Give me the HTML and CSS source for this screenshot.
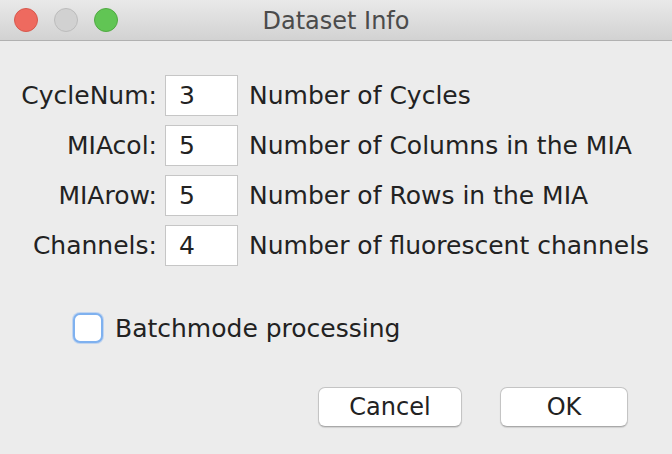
FILE: index.html
```html
<!DOCTYPE html>
<html>
<head>
<meta charset="utf-8">
<link rel="stylesheet" href="styles.css">
</head>
<body>
<div class="window">
  <div class="titlebar">
    <div class="lights">
      <span class="light red"></span>
      <span class="light gray"></span>
      <span class="light green"></span>
    </div>
    <div class="title">Dataset Info</div>
  </div>
  <div class="content">
    <div class="form">
      <label class="lbl">CycleNum:</label>
      <div class="field">3</div>
      <div class="desc">Number of Cycles</div>
      <label class="lbl">MIAcol:</label>
      <div class="field">5</div>
      <div class="desc">Number of Columns in the MIA</div>
      <label class="lbl">MIArow:</label>
      <div class="field">5</div>
      <div class="desc">Number of Rows in the MIA</div>
      <label class="lbl">Channels:</label>
      <div class="field">4</div>
      <div class="desc">Number of fluorescent channels</div>
    </div>
    <div class="check-row">
      <span class="checkbox"></span>
      <span class="check-label">Batchmode processing</span>
    </div>
    <div class="buttons">
      <div class="btn cancel">Cancel</div>
      <div class="btn ok">OK</div>
    </div>
  </div>
</div>
</body>
</html>
```

FILE: styles.css
```css
* { box-sizing: border-box; }
html, body {
  margin: 0;
  padding: 0;
  width: 672px;
  height: 454px;
  overflow: hidden;
  background: #ececec;
  font-family: "DejaVu Sans", "Liberation Sans", sans-serif;
  color: #222;
}
.window {
  width: 672px;
  height: 454px;
  display: flex;
  flex-direction: column;
}
.titlebar {
  height: 41px;
  position: relative;
  background: linear-gradient(#e9e9e9, #d2d2d2);
  border-bottom: 1px solid #b1b1b1;
  display: flex;
  align-items: center;
  justify-content: center;
}
.lights {
  position: absolute;
  left: 14px;
  top: 8px;
  display: flex;
  gap: 16px;
}
.light {
  width: 24px;
  height: 24px;
  border-radius: 50%;
  display: block;
}
.red { background: #ee6a5f; border: 1px solid #d7584d; }
.gray { background: #d1d1d1; border: 1px solid #bcbcbc; }
.green { background: #61c554; border: 1px solid #50aa42; }
.title {
  font-size: 24px;
  color: #4b4b4b;
  margin-top: 1px;
}
.content {
  flex: 1;
  display: flex;
  flex-direction: column;
}
.form {
  display: grid;
  grid-template-columns: 165px 73px 1fr;
  row-gap: 9px;
  padding-top: 34px;
  align-items: center;
  font-size: 25px;
}
.lbl {
  text-align: right;
  padding-right: 8px;
}
.field {
  height: 41px;
  background: #fff;
  border: 1px solid #c6c6c6;
  padding-left: 13px;
  display: flex;
  align-items: center;
}
.desc {
  padding-left: 11px;
}
.check-row {
  display: flex;
  align-items: center;
  margin-top: 47px;
  padding-left: 73px;
  font-size: 25px;
}
.checkbox {
  width: 30px;
  height: 30px;
  border-radius: 7px;
  background: #fff;
  border: 2px solid #7fb1ef;
  box-shadow: 0 0 0 1px rgba(140, 185, 245, 0.45);
  display: block;
}
.check-label {
  margin-left: 12px;
}
.buttons {
  display: flex;
  justify-content: flex-end;
  gap: 38px;
  margin-top: 44px;
  padding-right: 44px;
}
.btn {
  height: 40px;
  background: #fff;
  border: 1px solid #c4c4c4;
  border-bottom-color: #a9a9a9;
  border-radius: 7px;
  box-shadow: 0 1px 1px rgba(0, 0, 0, 0.12);
  font-size: 24px;
  display: flex;
  align-items: center;
  justify-content: center;
}
.cancel { width: 144px; }
.ok { width: 128px; }
```
